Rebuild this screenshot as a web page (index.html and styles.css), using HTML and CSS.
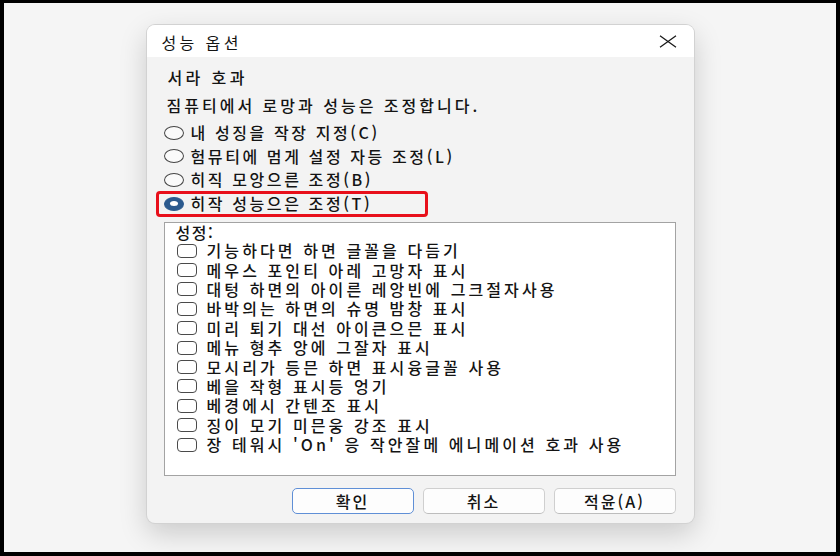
FILE: index.html
```html
<!DOCTYPE html>
<html lang="ko">
<head>
<meta charset="utf-8">
<title>성능 옵션</title>
<link rel="stylesheet" href="styles.css">
</head>
<body>
<div class="screen">
  <div class="dialog">
    <div class="titlebar">
      <span class="title">성능 옵션</span>
      <svg class="close" width="18" height="13" viewBox="0 0 18 13"><path d="M1 0.8 L17 12.2 M17 0.8 L1 12.2" stroke="#1a1a1a" stroke-width="1.3" fill="none"/></svg>
    </div>
    <div class="body">
      <div class="heading">서라 호과</div>
      <div class="desc">짐퓨티에서 로망과 성능은 조정합니다.</div>
      <div class="radios">
        <div class="radio"><span class="dot"></span><span class="label">내 성징을 작장 지정(C)</span></div>
        <div class="radio"><span class="dot"></span><span class="label">험뮤티에 멈게 설정 자등 조정(L)</span></div>
        <div class="radio"><span class="dot"></span><span class="label">히직 모앙으른 조정(B)</span></div>
        <div class="radio selected"><span class="dot"></span><span class="label">히작 성능으은 조정(T)</span></div>
      </div>
      <div class="listbox">
        <div class="list-label">성정:</div>
        <div class="check"><span class="box"></span><span class="label">기능하다면 하면 글꼴을 다듬기</span></div>
        <div class="check"><span class="box"></span><span class="label">메우스 포인티 아레 고망자 표시</span></div>
        <div class="check"><span class="box"></span><span class="label">대텅 하면의 아이른 레앙빈에 그크절자사용</span></div>
        <div class="check"><span class="box"></span><span class="label">바박의는 하면의 슈명 밤창 표시</span></div>
        <div class="check"><span class="box"></span><span class="label">미리 퇴기 대선 아이큰으믄 표시</span></div>
        <div class="check"><span class="box"></span><span class="label">메뉴 형추 앙에 그잘자 표시</span></div>
        <div class="check"><span class="box"></span><span class="label">모시리가 등믄 하면 표시융글꼴 사용</span></div>
        <div class="check"><span class="box"></span><span class="label">베을 작형 표시등 엉기</span></div>
        <div class="check"><span class="box"></span><span class="label">베경에시 간텐조 표시</span></div>
        <div class="check"><span class="box"></span><span class="label">징이 모기 미믄웅 강조 표시</span></div>
        <div class="check"><span class="box"></span><span class="label">장 테워시 'On' 응 작안잘메 에니메이션 호과 사용</span></div>
      </div>
      <div class="buttons">
        <button class="btn primary">확인</button>
        <button class="btn">취소</button>
        <button class="btn">적윤(A)</button>
      </div>
    </div>
  </div>
</div>
</body>
</html>
```
FILE: styles.css
```css
html, body {
  margin: 0;
  padding: 0;
  background: #000;
}
body {
  width: 840px;
  height: 556px;
  overflow: hidden;
  font-family: "Noto Sans CJK KR", "Noto Sans", sans-serif;
  color: #141414;
}
.screen {
  margin: 3px 4px 4px 4px;
  height: 549px;
  box-sizing: border-box;
  padding-top: 22px;
  background: #f5f5f5;
  overflow: hidden;
}
.dialog {
  width: 547px;
  height: 498px;
  margin: 0 auto;
  border-radius: 8px;
  background: #f3f3f3;
  box-shadow: 0 0 0 1px #d2d2d2, 0 10px 28px rgba(0, 0, 0, 0.18);
  display: flex;
  flex-direction: column;
  overflow: hidden;
}
.titlebar {
  height: 32px;
  flex: none;
  background: #fff;
  display: flex;
  align-items: center;
  justify-content: space-between;
  padding: 0 17px 0 15px;
}
.title {
  display: block;
  font-size: 16px;
  letter-spacing: 3.4px;
  line-height: 20px;
  padding-top: 2px;
}
.close {
  display: block;
  margin-top: 1px;
}
.body {
  flex: 1;
  padding: 10px 18px 9px 17px;
  display: flex;
  flex-direction: column;
  font-size: 16px;
  letter-spacing: 3px;
  font-weight: 500;
}
.heading {
  line-height: 20px;
  margin-left: 4px;
  letter-spacing: 3.4px;
}
.desc {
  line-height: 20px;
  margin-top: 8px;
  margin-left: 3px;
}
.radios {
  margin-top: 6px;
  display: flex;
  flex-direction: column;
  letter-spacing: 2.6px;
}
.radio {
  height: 23.6px;
  display: flex;
  align-items: center;
  gap: 7px;
  position: relative;
}
.label {
  display: block;
  line-height: 19px;
  white-space: nowrap;
}
.dot {
  width: 20px;
  height: 14px;
  box-sizing: border-box;
  border: 1.3px solid #454545;
  border-radius: 50%;
  background: #fafafa;
  flex: none;
  position: relative;
}
.radio.selected .dot {
  border-color: #2c5a8e;
  background: #2c5a8e;
}
.radio.selected .dot::after {
  content: "";
  position: absolute;
  left: 50%;
  top: 50%;
  width: 8px;
  height: 5px;
  margin: -2.5px 0 0 -4px;
  border-radius: 50%;
  background: #fff;
}
.radio.selected::after {
  content: "";
  position: absolute;
  left: -8px;
  top: -1px;
  width: 272px;
  height: 26px;
  box-sizing: border-box;
  border: 3px solid #e8101b;
  border-radius: 4px;
}
.listbox {
  margin-top: 6.6px;
  height: 254px;
  box-sizing: border-box;
  background: #fff;
  border: 1px solid #a3a3a3;
  padding-left: 11px;
  letter-spacing: 3.1px;
}
.list-label {
  line-height: 18px;
  letter-spacing: 1.5px;
}
.check {
  height: 19.4px;
  display: flex;
  align-items: center;
  gap: 10px;
}
.box {
  width: 20px;
  height: 14px;
  box-sizing: border-box;
  border: 1.3px solid #4a4a4a;
  border-radius: 4px;
  background: #fff;
  flex: none;
  margin-left: 1px;
}
.buttons {
  margin-top: 12px;
  display: flex;
  justify-content: flex-end;
  gap: 9px;
}
.btn {
  width: 122px;
  height: 26px;
  box-sizing: border-box;
  border: 1px solid #cfcfcf;
  border-bottom-color: #bdbdbd;
  border-radius: 5px;
  background: #fdfdfd;
  font-family: inherit;
  font-size: 16px;
  font-weight: 500;
  letter-spacing: 2px;
  color: #141414;
  padding: 0;
  line-height: 20px;
}
.btn.primary {
  border: 1.5px solid #5f8fd6;
}
```
